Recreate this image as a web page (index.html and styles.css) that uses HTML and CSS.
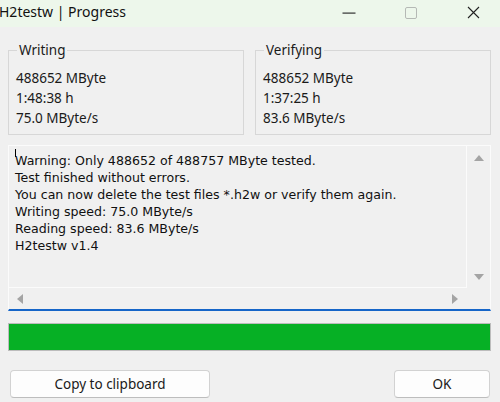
FILE: index.html
```html
<!DOCTYPE html>
<html lang="en">
<head>
<meta charset="utf-8">
<title>H2testw | Progress</title>
<link rel="stylesheet" href="styles.css">
</head>
<body>
<div class="window">
  <div class="titlebar">
    <span class="title">H2testw | Progress</span>
    <div class="caption">
      <span class="cap-btn"><svg width="14" height="12" viewBox="0 0 14 12"><rect x="0.5" y="5.5" width="13" height="1.2" fill="#333"/></svg></span>
      <span class="cap-btn"><svg width="12" height="12" viewBox="0 0 12 12"><rect x="0.5" y="0.5" width="11" height="11" rx="1.5" fill="none" stroke="#b5b9b5" stroke-width="1"/></svg></span>
      <span class="cap-btn"><svg width="13" height="13" viewBox="0 0 13 13"><path d="M1 1 L12 12 M12 1 L1 12" stroke="#222" stroke-width="1.1" fill="none"/></svg></span>
    </div>
  </div>

  <div class="groups">
    <fieldset class="group">
      <legend>Writing</legend>
      <div class="line">488652 MByte</div>
      <div class="line">1:48:38 h</div>
      <div class="line">75.0 MByte/s</div>
    </fieldset>
    <fieldset class="group">
      <legend>Verifying</legend>
      <div class="line">488652 MByte</div>
      <div class="line">1:37:25 h</div>
      <div class="line">83.6 MByte/s</div>
    </fieldset>
  </div>

  <div class="logbox">
    <div class="log"><span class="caret"></span>Warning: Only 488652 of 488757 MByte tested.<br>Test finished without errors.<br>You can now delete the test files *.h2w or verify them again.<br>Writing speed: 75.0 MByte/s<br>Reading speed: 83.6 MByte/s<br>H2testw v1.4</div>
    <div class="vscroll">
      <svg width="12" height="8" viewBox="0 0 12 8"><path d="M6 1 L11 7 L1 7 Z" fill="#a4a4a4"/></svg>
      <svg width="12" height="8" viewBox="0 0 12 8"><path d="M1 1 L11 1 L6 7 Z" fill="#a4a4a4"/></svg>
    </div>
    <div class="hscroll">
      <svg width="8" height="12" viewBox="0 0 8 12"><path d="M7 1 L7 11 L1 6 Z" fill="#a4a4a4"/></svg>
      <svg width="8" height="12" viewBox="0 0 8 12"><path d="M1 1 L7 6 L1 11 Z" fill="#a4a4a4"/></svg>
    </div>
    <div class="corner"></div>
  </div>

  <div class="progress"><div class="fill" style="width:100%"></div></div>

  <div class="buttons">
    <button class="btn btn-copy">Copy to clipboard</button>
    <button class="btn btn-ok">OK</button>
  </div>
</div>
</body>
</html>
```

FILE: styles.css
```css
html, body {
  margin: 0;
  padding: 0;
}
body {
  width: 500px;
  height: 402px;
  overflow: hidden;
  background: #f0f0f0;
  font-family: "Noto Sans", "Open Sans", sans-serif;
  color: #1a1a1a;
}
.window {
  display: flex;
  flex-direction: column;
}
.titlebar {
  height: 27px;
  background: #edf7eb;
  display: flex;
  align-items: center;
  overflow: hidden;
}
.title {
  font-size: 14px;
  margin-left: -1px;
  margin-bottom: 3px;
  color: #111;
  line-height: 20px;
}
.caption {
  margin-left: auto;
  margin-right: -4px;
  margin-bottom: 2px;
  display: flex;
}
.cap-btn {
  width: 62px;
  height: 25px;
  display: flex;
  align-items: center;
  justify-content: center;
}

.groups {
  display: flex;
  gap: 11px;
  margin: 15px 9px 0 8px;
}
.group {
  width: 236px;
  box-sizing: border-box;
  margin: 0;
  border: 1px solid #d7d7d7;
  padding: 10px 6px 6px 7px;
  min-width: 0;
}
.group legend {
  font-size: 13.5px;
  line-height: 16px;
  padding: 0 2px;
  margin-left: 1px;
  color: #1a1a1a;
}
.line {
  font-size: 13.5px;
  line-height: 20px;
  white-space: nowrap;
}

.logbox {
  margin: 10px 9px 0 8px;
  height: 166px;
  box-sizing: border-box;
  border: 1px solid #fbfbfb;
  border-bottom: 2px solid #1565c8;
  display: grid;
  grid-template-columns: 1fr 23px;
  grid-template-rows: 1fr 21px;
}
.log {
  border-right: 1px solid #fbfbfb;
  border-bottom: 1px solid #fbfbfb;
  padding: 3px 0 0 6px;
  font-family: "DejaVu Sans", Verdana, sans-serif;
  font-size: 12.6px;
  line-height: 17px;
  color: #111;
  white-space: nowrap;
  overflow: hidden;
}
.caret {
  display: inline-block;
  width: 1px;
  height: 8px;
  background: #000;
  vertical-align: 8px;
  margin-right: -1px;
}
.vscroll {
  display: flex;
  flex-direction: column;
  justify-content: space-between;
  align-items: center;
  padding: 8px 0 7px;
}
.hscroll {
  display: flex;
  justify-content: space-between;
  align-items: center;
  padding: 0 8px 0 7px;
}

.progress {
  margin: 12px 9px 0 8px;
  height: 28px;
  box-sizing: border-box;
  border: 1px solid #bcbcbc;
  background: #e6e6e6;
  display: flex;
}
.fill {
  background: #06b025;
}

.buttons {
  display: flex;
  justify-content: space-between;
  margin: 19px 10px 0 10px;
}
.btn {
  height: 28px;
  box-sizing: border-box;
  background: #fdfdfd;
  border: 1px solid #d2d2d2;
  border-bottom-color: #bdbdbd;
  border-radius: 4px;
  font-family: "Noto Sans", "Open Sans", sans-serif;
  font-size: 13.5px;
  color: #1a1a1a;
  padding: 0;
}
.btn-copy {
  width: 200px;
}
.btn-ok {
  width: 96px;
}
```
